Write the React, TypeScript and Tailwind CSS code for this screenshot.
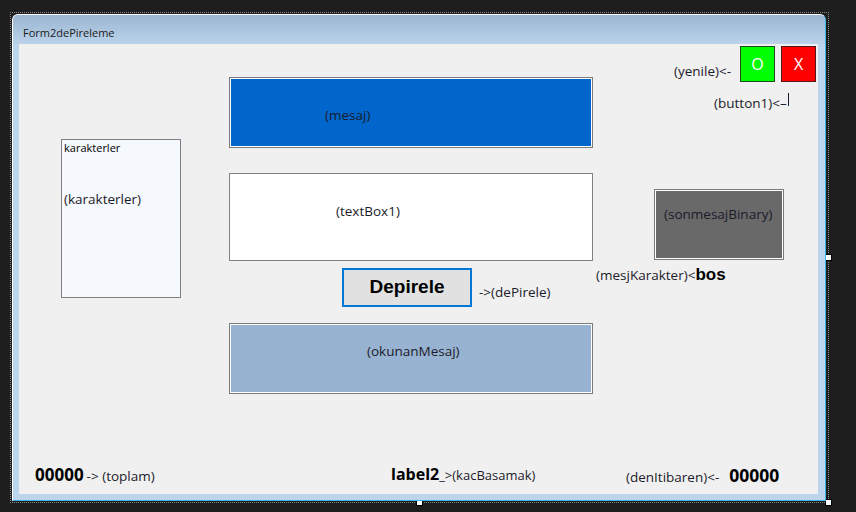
import React from 'react';

const ui = { fontFamily: '"Open Sans", "Noto Sans", sans-serif' };
const arial = { fontFamily: '"Liberation Sans", Arial, sans-serif' };

function Box({ className, children }: { className: string; children?: React.ReactNode }) {
    return (
        <div className={`absolute border border-[#7a7a7a] ${className}`}>
            <div className="w-full h-full border border-white relative">{children}</div>
        </div>
    );
}

function Handle({ className }: { className: string }) {
    return <div className={`absolute w-[7px] h-[7px] bg-white border border-black ${className}`} />;
}

export default function App() {
    return (
        <div className="relative w-[856px] h-[512px] bg-[#1e1e1e] overflow-hidden text-[13.5px] text-[#1b1b2a]" style={ui}>
            {/* designer selection */}
            <div className="absolute left-[10px] top-[12px] w-[819px] h-[491px] border border-dotted border-[#8a8a8a]" />
            <Handle className="left-[825px] top-[254px]" />
            <Handle className="left-[416px] top-[499px]" />
            <Handle className="left-[825px] top-[499px]" />

            {/* window */}
            <div className="absolute left-[12px] top-[14px] w-[814px] h-[487px] rounded-t-[6px] bg-[#bcd4ec] border border-white border-r-[#38b6e8] border-b-[#38b6e8] flex flex-col">
                <div className="h-[29px] rounded-t-[5px] bg-gradient-to-b from-[#9cb6d2] to-[#bad2ea] pl-[10px] pt-[11px] text-[11px] leading-[14px] text-[#1a1a1a]">
                    Form2dePireleme
                </div>
                <div className="relative ml-[6px] mr-[7px] mb-[6px] flex-1 bg-[#f0f0f0]">
                    {/* top-right buttons */}
                    <div className="absolute left-[721px] top-[2px] flex gap-[6px]">
                        <div className="w-[35px] h-[36px] bg-[#00ff00] border border-[#1d4d1d] flex items-center justify-center text-white text-[16px]">O</div>
                        <div className="w-[35px] h-[36px] bg-[#ff0000] border border-[#4d1d1d] flex items-center justify-center text-white text-[16px]">X</div>
                    </div>
                    <div className="absolute left-[655px] top-[18px] leading-[18px]">(yenile)&lt;-</div>
                    <div className="absolute left-[695px] top-[49px] leading-[18px] flex items-end">
                        <span>(button1)&lt;–</span>
                        <span className="w-px h-[13px] mb-[6px] ml-[1px] bg-[#1b1b2a]" />
                    </div>

                    {/* karakterler */}
                    <div className="absolute left-[42px] top-[95px] w-[120px] h-[159px] border border-[#808080] bg-[#f5f8fc]">
                        <div className="pl-[2px] pt-[1px] text-[11px] leading-[14px] text-black">karakterler</div>
                        <div className="pl-[2px] mt-[35px] leading-[18px]">(karakterler)</div>
                    </div>

                    {/* mesaj */}
                    <Box className="left-[210px] top-[33px] w-[364px] h-[71px] bg-[#0066cc]">
                        <div className="absolute left-[94px] top-[27px] leading-[18px]">(mesaj)</div>
                    </Box>

                    {/* textBox1 */}
                    <div className="absolute left-[210px] top-[129px] w-[364px] h-[88px] bg-white border border-[#808080]">
                        <div className="absolute left-[106px] top-[28px] leading-[18px]">(textBox1)</div>
                    </div>

                    {/* Depirele */}
                    <div className="absolute left-[323px] top-[224px] flex items-center gap-[7px]">
                        <div className="w-[130px] h-[39px] pb-[1px] border-2 border-[#0078d7] bg-[#e1e1e1] flex items-center justify-center text-[19px] font-bold text-black" style={arial}>
                            Depirele
                        </div>
                        <div className="mt-[8px] leading-[18px]">-&gt;(dePirele)</div>
                    </div>

                    {/* okunanMesaj */}
                    <Box className="left-[210px] top-[279px] w-[364px] h-[71px] bg-[#98b3d2]">
                        <div className="absolute left-[136px] top-[17px] leading-[18px]">(okunanMesaj)</div>
                    </Box>

                    {/* sonmesajBinary */}
                    <Box className="left-[635px] top-[145px] w-[130px] h-[71px] bg-[#696969]">
                        <div className="absolute left-[8px] top-[14px] leading-[18px]">(sonmesajBinary)</div>
                    </Box>
                    <div className="absolute left-[577px] top-[222px] leading-[18px] flex items-baseline">
                        <span>(mesjKarakter)&lt;</span>
                        <span className="text-[17px] font-bold text-black" style={arial}>bos</span>
                    </div>

                    {/* bottom row */}
                    <div className="absolute left-[16px] top-[418px] flex items-baseline">
                        <span className="text-[17px] font-bold text-black">00000</span>
                        <span className="ml-[3px] text-[13.5px]">-&gt; (toplam)</span>
                    </div>
                    <div className="absolute left-[372px] top-[418px] flex items-baseline">
                        <span className="text-[16px] font-bold text-black">label2</span>
                        <span className="text-[13px]">_&gt;(kacBasamak)</span>
                    </div>
                    <div className="absolute left-[607px] top-[418px] flex items-baseline">
                        <span className="text-[13.5px]">(denItibaren)&lt;-</span>
                        <span className="ml-[10px] text-[17.5px] font-bold text-black">00000</span>
                    </div>
                </div>
            </div>
        </div>
    );
}
